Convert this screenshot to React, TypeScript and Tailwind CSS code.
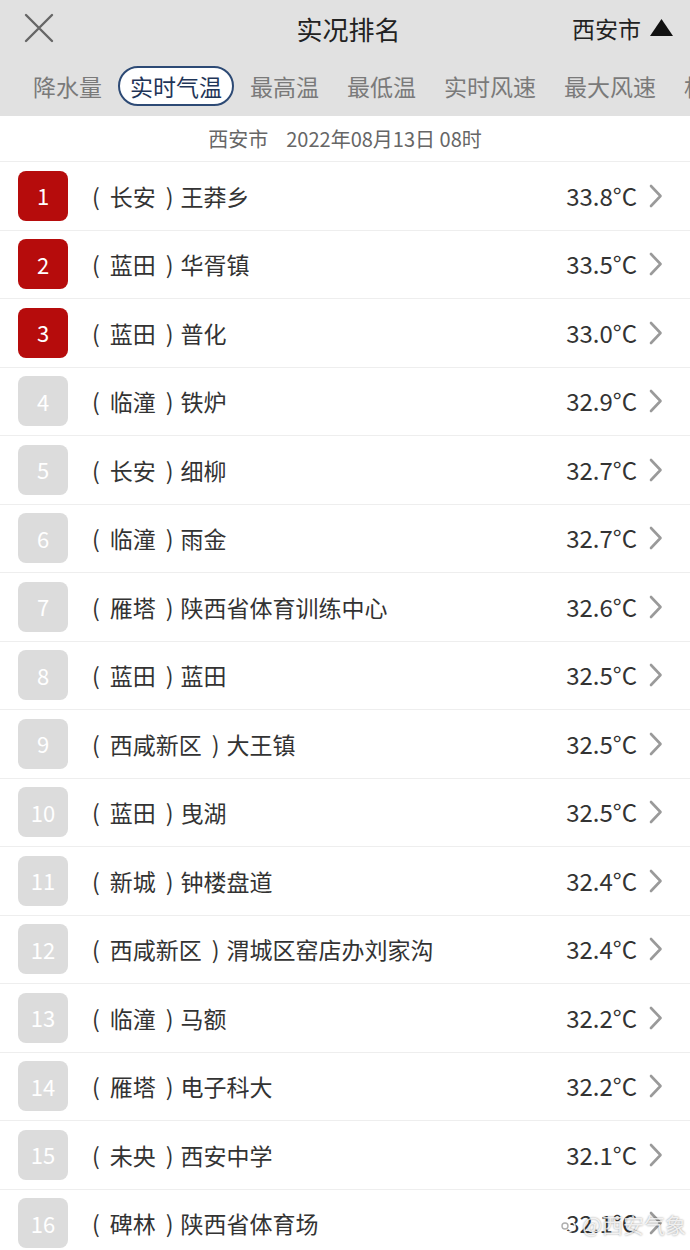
const FONT = { fontFamily: '"Noto Sans CJK SC", "Noto Sans", sans-serif' };

const tabs = ['降水量', '实时气温', '最高温', '最低温', '实时风速', '最大风速', '相对湿度'];

const rows = [
  { area: '长安', name: '王莽乡', temp: '33.8' },
  { area: '蓝田', name: '华胥镇', temp: '33.5' },
  { area: '蓝田', name: '普化', temp: '33.0' },
  { area: '临潼', name: '铁炉', temp: '32.9' },
  { area: '长安', name: '细柳', temp: '32.7' },
  { area: '临潼', name: '雨金', temp: '32.7' },
  { area: '雁塔', name: '陕西省体育训练中心', temp: '32.6' },
  { area: '蓝田', name: '蓝田', temp: '32.5' },
  { area: '西咸新区', name: '大王镇', temp: '32.5' },
  { area: '蓝田', name: '曳湖', temp: '32.5' },
  { area: '新城', name: '钟楼盘道', temp: '32.4' },
  { area: '西咸新区', name: '渭城区窑店办刘家沟', temp: '32.4' },
  { area: '临潼', name: '马额', temp: '32.2' },
  { area: '雁塔', name: '电子科大', temp: '32.2' },
  { area: '未央', name: '西安中学', temp: '32.1' },
  { area: '碑林', name: '陕西省体育场', temp: '32.1' },
];

function Chevron() {
  return (
    <svg width="14" height="24" viewBox="0 0 14 24" fill="none">
      <path d="M2 2 L11.5 12 L2 22" stroke="#9a9a9a" strokeWidth="2.6" strokeLinecap="round" strokeLinejoin="round" />
    </svg>
  );
}

export default function App() {
  return (
    <div className="relative w-[690px] h-[1250px] overflow-hidden bg-white text-[#333]" style={FONT}>
      {/* Header */}
      <div className="bg-[#e1e1e1]">
        <div className="h-[56px] grid grid-cols-[1fr_auto_1fr] items-center pl-[24px] pr-[17px]">
          <svg width="30" height="30" viewBox="0 0 30 30" fill="none">
            <path d="M2 2 L28 28 M28 2 L2 28" stroke="#666" strokeWidth="2.4" strokeLinecap="round" />
          </svg>
          <div className="text-[26px] text-[#222]">实况排名</div>
          <div className="flex items-center justify-end gap-[9px] text-[23px] text-[#222]">
            <span>西安市</span>
            <svg width="23" height="18" viewBox="0 0 23 18">
              <path d="M11.5 0 L23 17 L0 17 Z" fill="#111" />
            </svg>
          </div>
        </div>
        <div className="h-[60px] flex items-center pl-[19px] whitespace-nowrap overflow-hidden">
          {tabs.map((t, i) => (
            <div
              key={t}
              className={
                i === 1
                  ? 'shrink-0 px-[10px] h-[40px] flex items-center rounded-full border-2 border-[#2d4a75] bg-white text-[#1f3558] text-[23px] mx-[2px]'
                  : 'shrink-0 px-[14px] text-[23px] text-[#7a7a7a]'
              }
            >
              {t}
            </div>
          ))}
        </div>
      </div>

      {/* Date */}
      <div className="h-[46px] flex items-center justify-center text-[20px] text-[#666] border-b border-[#eee]">
        <span>西安市</span>
        <span className="ml-[18px]">2022年08月13日 08时</span>
      </div>

      {/* List */}
      <div>
        {rows.map((r, i) => (
          <div key={i} className="h-[68.5px] flex items-center border-b border-[#eee] pl-[18px] pr-[27px]">
            <div
              className={`w-[50px] h-[50px] rounded-[8px] flex items-center justify-center text-[22px] text-white ${
                i < 3 ? 'bg-[#b60c0c]' : 'bg-[#dcdcdc]'
              }`}
            >
              {i + 1}
            </div>
            <div className="flex-1 flex items-center text-[23px] text-[#333] ml-[24px]">
              <span>(</span>
              <span className="mx-[10px]">{r.area}</span>
              <span>)</span>
              <span className="ml-[7px]">{r.name}</span>
            </div>
            <div className="text-[24px] text-[#333] mr-[12px]">{r.temp}°C</div>
            <Chevron />
          </div>
        ))}
      </div>

      {/* Watermark */}
      <div
        className="absolute right-[4px] bottom-[10px] flex items-center gap-[4px] text-[21px] text-white/80"
        style={{ textShadow: '0 0 2px rgba(0,0,0,0.45)' }}
      >
        <svg width="22" height="18" viewBox="0 0 22 18" fill="none">
          <ellipse cx="10" cy="11" rx="9" ry="6" stroke="rgba(255,255,255,0.85)" strokeWidth="1.6" />
          <circle cx="9" cy="11" r="3" stroke="rgba(120,120,120,0.6)" strokeWidth="1.4" />
        </svg>
        <span>@西安气象</span>
      </div>
    </div>
  );
}
